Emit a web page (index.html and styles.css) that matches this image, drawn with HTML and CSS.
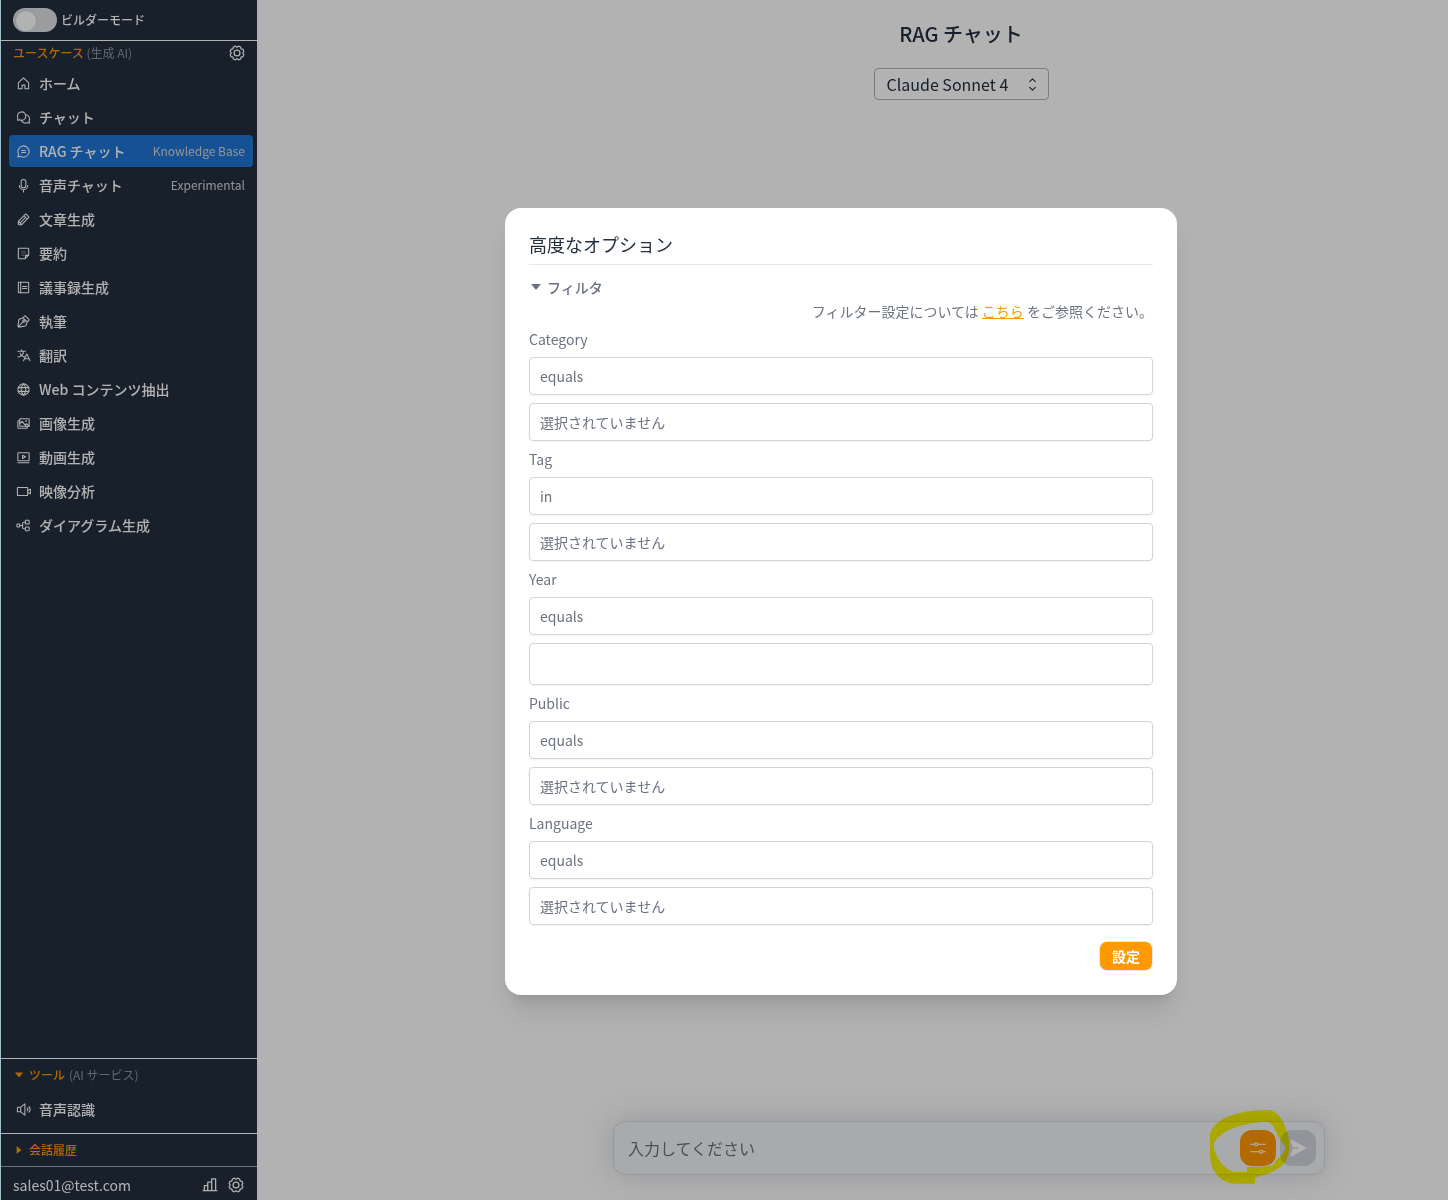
FILE: index.html
```
<!DOCTYPE html>
<html lang="ja">

<head>
    <meta charset="UTF-8">
    <meta name="viewport" content="width=device-width, initial-scale=1.0">
    <title>RAG チャット</title>
    <link rel="stylesheet" href="styles.css">
</head>

<body>
    <div class="app">
        <aside class="sidebar">
            <div class="builder">
                <span class="toggle"></span>
                <span>ビルダーモード</span>
            </div>
            <div class="section-head">
                <span><b>ユースケース</b> (生成 AI)</span>
                <svg class="icon icon-lg" viewBox="0 0 256 256"><use href="#gear" /></svg>
            </div>
            <nav class="menu">
                <a class="item"><svg class="icon" viewBox="0 0 256 256"><path d="M104 216v-60h48v60h64V120a8 8 0 0 0-2.3-5.7l-80-80a8 8 0 0 0-11.4 0l-80 80A8 8 0 0 0 40 120v96Z" /></svg>ホーム</a>
                <a class="item"><svg class="icon" viewBox="0 0 256 256"><path d="M32.5 138A72 72 0 1 1 62 167.500L35 175.600a8 8 0 0 1-10-10Z" /><path d="M163.900 80.600a72 72 0 0 1 59.600 105.400l7.600 27.600a8 8 0 0 1-10 10L194 215.500a72 72 0 0 1-101.900-40" /></svg>チャット</a>
                <a class="item active"><svg class="icon" viewBox="0 0 256 256"><path d="M45.400 177A95.900 95.900 0 1 1 79 210.600l-36.500 12.300a8 8 0 0 1-10-10Z" /><path d="M96 112h64M96 144h64" /></svg>RAG チャット<small>Knowledge Base</small></a>
                <a class="item"><svg class="icon" viewBox="0 0 256 256"><rect x="88" y="24" width="80" height="144" rx="40" /><path d="M128 200v40M200 128a72 72 0 0 1-144 0" /></svg>音声チャット<small>Experimental</small></a>
                <a class="item"><svg class="icon" viewBox="0 0 256 256"><path d="M92.700 216H48a8 8 0 0 1-8-8v-44.700a8 8 0 0 1 2.300-5.600l120-120a8 8 0 0 1 11.400 0l44.700 44.600a8 8 0 0 1 0 11.400l-120 120a8 8 0 0 1-5.700 2.300ZM136 64l56 56M164 92l-96 96M42 158l56 56" /></svg>文章生成</a>
                <a class="item"><svg class="icon" viewBox="0 0 256 256"><path d="M156.700 216H48a8 8 0 0 1-8-8V48a8 8 0 0 1 8-8h160a8 8 0 0 1 8 8v108.700ZM215 160h-55v55" /><path class="faint" d="M96 96h64M96 128h64M96 160h32" /></svg>要約</a>
                <a class="item"><svg class="icon" viewBox="0 0 256 256"><rect x="40" y="40" width="176" height="176" rx="8" /><path d="M80 40v176M112 112h72M112 144h72" /></svg>議事録生成</a>
                <a class="item"><svg class="icon" viewBox="0 0 256 256"><path d="M40 216l84-84M48 224l112-18a8 8 0 0 0 6-5l26-65-72-72-65 26a8 8 0 0 0-5 6L32 208M192 136l30-30a8 8 0 0 0 0-11l-61-61a8 8 0 0 0-11 0l-30 30" /><circle cx="136" cy="120" r="20" /></svg>執筆</a>
                <a class="item"><svg class="icon" viewBox="0 0 256 256"><path d="M240 216l-56-112-56 112M144 184h80M96 32v24M32 56h128M128 56a96 96 0 0 1-96 96M69 88a96 96 0 0 0 83 64" /></svg>翻訳</a>
                <a class="item"><svg class="icon" viewBox="0 0 256 256"><circle cx="128" cy="128" r="96" /><path d="M128 32c-53 54-53 138 0 192 53-54 53-138 0-192M38 96h180M38 160h180" /></svg>Web コンテンツ抽出</a>
                <a class="item"><svg class="icon" viewBox="0 0 256 256"><rect x="64" y="48" width="160" height="128" rx="8" /><circle cx="172" cy="84" r="6" /><path d="M64 128l40-36 72 84M158 154l22-22 44 40M192 176v24a8 8 0 0 1-8 8H40a8 8 0 0 1-8-8V88a8 8 0 0 1 8-8h24" /></svg>画像生成</a>
                <a class="item"><svg class="icon" viewBox="0 0 256 256"><rect x="32" y="48" width="192" height="136" rx="8" /><path d="M112 88l48 28-48 30ZM32 216h192" /></svg>動画生成</a>
                <a class="item"><svg class="icon" viewBox="0 0 256 256"><rect x="24" y="60" width="176" height="136" rx="8" /><path d="M200 112l48-24v80l-48-24" /></svg>映像分析</a>
                <a class="item"><svg class="icon" viewBox="0 0 256 256"><rect x="160" y="40" width="64" height="64" rx="8" /><rect x="160" y="152" width="64" height="64" rx="8" /><rect x="16" y="104" width="48" height="48" rx="8" /><path d="M64 128h48M160 184h-24a24 24 0 0 1-24-24V96a24 24 0 0 1 24-24h24" /></svg>ダイアグラム生成</a>
            </nav>
            <div class="tools">
                <div class="fold"><i class="tri down"></i><b>ツール</b><span>(AI サービス)</span></div>
                <a class="item"><svg class="icon" viewBox="0 0 256 256"><path d="M80 168H32a8 8 0 0 1-8-8V96a8 8 0 0 1 8-8h48l72-56v192ZM80 88v80M192 104a32 32 0 0 1 0 48M220 80a72 72 0 0 1 0 96" /></svg>音声認識</a>
            </div>
            <div class="history">
                <div class="fold"><i class="tri right"></i><b>会話履歴</b></div>
            </div>
            <div class="account">
                <span class="mail">sales01@test.com</span>
                <svg class="icon icon-lg" viewBox="0 0 256 256"><path d="M48 208v-72h48M96 208V88h56M152 208V40h56v168M224 208H32" /></svg>
                <svg class="icon icon-lg" viewBox="0 0 256 256"><use href="#gear" /></svg>
            </div>
        </aside>

        <main class="main">
            <h1>RAG チャット</h1>
            <div class="model">
                <span>Claude Sonnet 4</span>
                <svg class="icon" viewBox="0 0 256 256"><path d="M80 176l48 48 48-48M80 80l48-48 48 48" /></svg>
            </div>
            <div class="composer">
                <span class="placeholder">入力してください</span>
                <button class="square option"><svg class="icon" viewBox="0 0 256 256"><path d="M32 80h52M124 80h100M32 176h116M188 176h36" /><circle cx="104" cy="80" r="20" /><circle cx="168" cy="176" r="20" /></svg></button>
                <button class="square send"><svg viewBox="0 0 256 256"><path d="M240 128 50 234a12 12 0 0 1-17-15l29-81h66v-20H62L33 37A12 12 0 0 1 50 22Z" /></svg></button>
            </div>
        </main>
    </div>

    <div class="overlay">
        <div class="modal">
            <h2>高度なオプション</h2>
            <div class="filter"><i class="tri down"></i>フィルタ</div>
            <p class="help">フィルター設定については <a>こちら</a> をご参照ください。</p>
            <label>Category</label>
            <div class="field">equals</div>
            <div class="field">選択されていません</div>
            <label>Tag</label>
            <div class="field">in</div>
            <div class="field">選択されていません</div>
            <label>Year</label>
            <div class="field">equals</div>
            <div class="field tall"></div>
            <label>Public</label>
            <div class="field">equals</div>
            <div class="field">選択されていません</div>
            <label>Language</label>
            <div class="field">equals</div>
            <div class="field">選択されていません</div>
            <div class="actions"><button class="submit">設定</button></div>
        </div>
    </div>

    <!-- highlighter mark around the option button -->
    <svg class="marker" viewBox="0 0 450 300">
        <path fill-rule="evenodd" d="M60 105C67 55 150 29 235 30C270 34 282 70 294 103C302 142 298 177 275 198C252 216 224 224 195 233V251H130C84 244 59 205 60 160ZM71 136C75 102 140 69 230 65C252 69 254 91 268 114C277 128 288 140 287 148C280 163 268 174 258 181C254 194 246 198 236 199L171 201V216H130C97 204 74 168 71 136Z" />
    </svg>

    <svg class="defs">
        <symbol id="gear" viewBox="0 0 256 256">
            <circle cx="128" cy="128" r="42" />
            <path d="M128 46L151 31L180 43L186 70L213 76L225 105L210 128L225 151L213 180L186 186L180 213L151 225L128 210L105 225L76 213L70 186L43 180L31 151L46 128L31 105L43 76L70 70L76 43L105 31Z" />
        </symbol>
    </svg>
</body>

</html>
```
FILE: styles.css
```
* {
    box-sizing: border-box;
}

body {
    margin: 0;
    height: 1200px;
    overflow: hidden;
    position: relative;
    background: #fff;
    color: #232f3e;
    font-family: "Noto Sans CJK JP", sans-serif;
    font-size: 14px;
    line-height: 20px;
}

b {
    font-weight: 500;
}

button {
    border: 0;
    padding: 0;
    font: inherit;
}

.app {
    display: flex;
    height: 1200px;
    border-left: 1px solid #9fbccb;
}

.icon {
    width: 15px;
    height: 15px;
    flex: none;
    fill: none;
    stroke: currentColor;
    stroke-width: 18;
    stroke-linecap: round;
    stroke-linejoin: round;
}

.icon-lg {
    width: 18px;
    height: 18px;
}

.faint {
    opacity: 0.3;
}

.defs {
    display: none;
}

/* sidebar */
.sidebar {
    width: 256px;
    flex: none;
    display: flex;
    flex-direction: column;
    background: #232f3e;
    color: #fff;
}

.builder {
    height: 41px;
    padding: 0 12px;
    display: flex;
    align-items: center;
    gap: 4px;
    border-bottom: 1px solid #fff;
    font-size: 12px;
    font-weight: 500;
}

.toggle {
    width: 44px;
    height: 24px;
    padding: 2px;
    border-radius: 12px;
    background: #dfe0e3;
}

.toggle::after {
    content: "";
    display: block;
    width: 20px;
    height: 20px;
    border: 1px solid #d1d5db;
    border-radius: 50%;
    background: #fff;
}

.section-head {
    height: 26px;
    padding: 0 11px 2px 12px;
    display: flex;
    align-items: center;
    justify-content: space-between;
    font-size: 12px;
    color: #8c96a3;
}

.section-head .icon {
    color: #fff;
}

.section-head b,
.fold b {
    color: #f90;
}

.menu {
    flex: 1;
}

.item {
    display: flex;
    align-items: center;
    height: 32px;
    margin: 0 4px 2px 8px;
    padding: 0 8px 0 7px;
    border-radius: 4px;
    font-weight: 500;
}

.item .icon {
    margin-right: 8px;
}

.item small {
    margin-left: auto;
    font-size: 12px;
    font-weight: 400;
    color: #d1d5db;
}

.item.active {
    background: #2074d5;
}

.tools {
    height: 75px;
    border-top: 1px solid #fff;
}

.fold {
    height: 34px;
    padding: 0 0 2px 14px;
    display: flex;
    align-items: center;
    font-size: 12px;
    color: #8c96a3;
}

.fold span {
    margin-left: 4px;
}

.fold .tri {
    color: #f90;
    margin-right: 6px;
}

.tri {
    width: 8px;
    height: 8px;
    background: currentColor;
}

.tri.down {
    clip-path: polygon(0 20%, 100% 20%, 50% 80%);
}

.tri.right {
    clip-path: polygon(20% 0, 80% 50%, 20% 100%);
}

.history {
    height: 33px;
    border-top: 1px solid #fff;
}

.account {
    height: 34px;
    padding: 3px 12px 0;
    display: flex;
    align-items: center;
    gap: 8px;
    border-top: 1px solid #9ca3af;
}

.mail {
    flex: 1;
}

/* chat area */
.main {
    flex: 1;
    padding-left: 217px;
    display: flex;
    flex-direction: column;
    align-items: center;
}

h1 {
    margin: 20px 0;
    font-size: 20px;
    line-height: 28px;
    font-weight: 500;
}

.model {
    width: 175px;
    height: 32px;
    padding: 0 8px 0 12px;
    display: flex;
    align-items: center;
    justify-content: space-between;
    border: 1px solid #b4b4b4;
    border-radius: 4px;
    font-size: 16px;
}

.composer {
    width: 712px;
    height: 54px;
    margin: auto 0 25px 16px;
    padding: 0 8px 0 14px;
    display: flex;
    align-items: center;
    gap: 4px;
    border: 1px solid #d9dbdf;
    border-radius: 12px;
    background: #f3f4f6;
    box-shadow: 0 0 30px 1px rgba(156, 163, 175, 0.4);
}

.placeholder {
    flex: 1;
    font-size: 16px;
    color: #6b7280;
}

.square {
    width: 36px;
    height: 36px;
    display: flex;
    align-items: center;
    justify-content: center;
    border-radius: 12px;
    color: #fff;
}

.option {
    background: #f90;
}

.option .icon {
    width: 20px;
    height: 20px;
    stroke-width: 14;
}

.send {
    background: #d1d5db;
}

.send svg {
    width: 20px;
    height: 20px;
    fill: #fff;
}

/* dialog */
.overlay {
    position: absolute;
    inset: 0 0 0 1px;
    background: rgba(0, 0, 0, 0.3);
}

.modal {
    width: 672px;
    height: 787px;
    margin: 208px 0 0 504px;
    padding: 24px;
    border-radius: 16px;
    background: #fff;
    box-shadow: 0 20px 25px -5px rgba(0, 0, 0, 0.1), 0 8px 10px -6px rgba(0, 0, 0, 0.1);
    color: #6b7280;
}

h2 {
    margin: 0;
    height: 33px;
    border-bottom: 1px solid #e5e7eb;
    font-size: 18px;
    line-height: 25px;
    font-weight: 400;
    color: #232f3e;
}

.filter {
    height: 20px;
    margin-top: 12px;
    display: flex;
    align-items: center;
    font-weight: 500;
}

.filter .tri {
    width: 10px;
    height: 10px;
    margin: 0 6px 0 2px;
}

.help {
    margin: 4px 0 8px;
    text-align: right;
}

.help a {
    color: #f90;
    text-decoration: underline;
}

label {
    display: block;
    height: 28px;
}

.field {
    height: 38px;
    margin-bottom: 8px;
    padding: 8px 10px;
    border: 1px solid #d1d5db;
    border-radius: 4px;
    box-shadow: 0 1px 2px rgba(0, 0, 0, 0.05);
}

.field.tall {
    height: 42px;
}

.actions {
    display: flex;
    justify-content: flex-end;
    margin-top: 16px;
}

.submit {
    width: 54px;
    height: 30px;
    border: 1px solid #e5e7eb;
    border-radius: 8px;
    background: #f90;
    color: #fff;
    font-weight: 600;
}

.marker {
    position: absolute;
    left: 1190px;
    top: 1100px;
    width: 150px;
    height: 100px;
    fill: #fffa00;
    mix-blend-mode: multiply;
}
```
